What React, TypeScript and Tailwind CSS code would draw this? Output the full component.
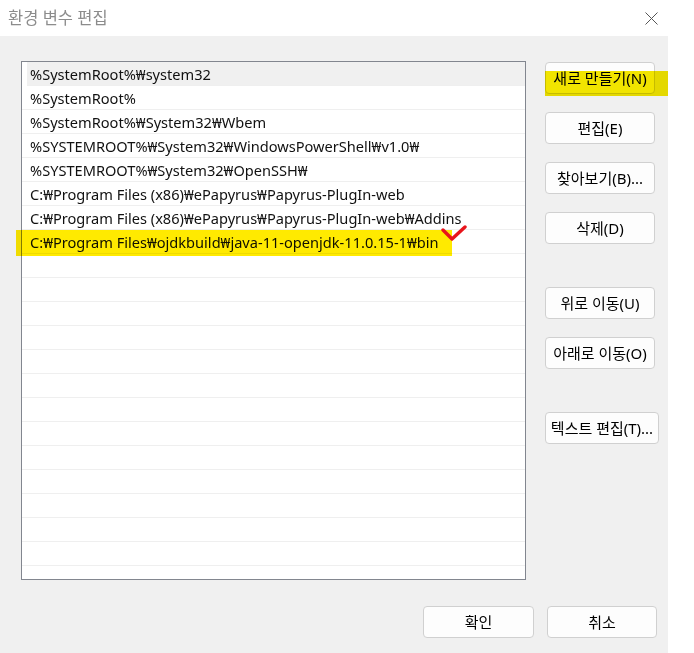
import React from "react";

const paths = [
  "%SystemRoot%₩system32",
  "%SystemRoot%",
  "%SystemRoot%₩System32₩Wbem",
  "%SYSTEMROOT%₩System32₩WindowsPowerShell₩v1.0₩",
  "%SYSTEMROOT%₩System32₩OpenSSH₩",
  "C:₩Program Files (x86)₩ePapyrus₩Papyrus-PlugIn-web",
  "C:₩Program Files (x86)₩ePapyrus₩Papyrus-PlugIn-web₩Addins",
  "C:₩Program Files₩ojdkbuild₩java-11-openjdk-11.0.15-1₩bin",
];

const emptyRows = Array.from({ length: 14 });

function WinButton({ label, className = "" }: { label: string; className?: string }) {
  return (
    <button
      className={
        "h-[32px] rounded-[4px] border border-[#d0d0d0] bg-[#fdfdfd] text-[15px] text-black leading-none " +
        className
      }
    >
      {label}
    </button>
  );
}

export default function App() {
  return (
    <div
      className="w-[694px] h-[653px] bg-white flex flex-col overflow-hidden"
      style={{ fontFamily: '"Segoe UI", "Noto Sans", "Noto Sans CJK KR", sans-serif' }}
    >
      {/* Title bar */}
      <div className="h-[36px] flex items-center justify-between pl-[8px] pr-[36px] shrink-0">
        <span className="text-[16.5px] text-[#8c8c8c]">환경 변수 편집</span>
        <svg width="13" height="13" viewBox="0 0 13 13" className="text-[#555]">
          <path d="M0.5 0.5 L12.5 12.5 M12.5 0.5 L0.5 12.5" stroke="currentColor" strokeWidth="1" />
        </svg>
      </div>

      <div className="flex flex-1">
        <div className="w-[668px] bg-[#f0f0f0] relative pt-[25px] pl-[21px] flex flex-col">
          <div className="flex gap-[19px]">
            {/* Path list */}
            <div className="w-[505px] h-[519px] border border-[#82868f] bg-white overflow-hidden">
              {paths.map((p, i) => (
                <div
                  key={p}
                  className={
                    "h-[24px] border-b border-[#efefef] flex items-center pt-[3px] text-[14.6px] text-[#111] whitespace-nowrap " +
                    (i === 0 ? "bg-[#f0f0f0] ml-[5px] pl-[3px]" : "pl-[8px]")
                  }
                >
                  {p}
                </div>
              ))}
              {emptyRows.map((_, i) => (
                <div key={i} className="h-[24px] border-b border-[#efefef]" />
              ))}
            </div>

            {/* Side buttons */}
            <div className="flex flex-col pt-[1px]">
              <WinButton label="새로 만들기(N)" className="w-[110px]" />
              <WinButton label="편집(E)" className="w-[110px] mt-[18px]" />
              <WinButton label="찾아보기(B)..." className="w-[110px] mt-[18px]" />
              <WinButton label="삭제(D)" className="w-[110px] mt-[18px]" />
              <WinButton label="위로 이동(U)" className="w-[110px] mt-[43px]" />
              <WinButton label="아래로 이동(O)" className="w-[110px] mt-[18px]" />
              <WinButton label="텍스트 편집(T)..." className="w-[114px] mt-[43px]" />
            </div>
          </div>

          {/* Bottom buttons */}
          <div className="flex justify-end gap-[13px] mt-[26px] pr-[11px]">
            <WinButton label="확인" className="w-[111px]" />
            <WinButton label="취소" className="w-[110px]" />
          </div>

          {/* Highlighter marks */}
          <div className="absolute left-[16px] top-[194px] w-[436px] h-[26px] bg-[#ffea00] mix-blend-multiply" />
          <div className="absolute left-[545px] top-[35px] w-[123px] h-[25px] bg-[#f3e600] mix-blend-multiply" />
          <svg
            className="absolute left-[440px] top-[189px]"
            width="28"
            height="18"
            viewBox="0 0 28 18"
          >
            <path
              d="M3 5 L12 14 L25 2"
              stroke="#e8141b"
              strokeWidth="3.4"
              fill="none"
              strokeLinecap="round"
              strokeLinejoin="round"
            />
          </svg>
        </div>
        <div className="flex-1 bg-white" />
      </div>
    </div>
  );
}
